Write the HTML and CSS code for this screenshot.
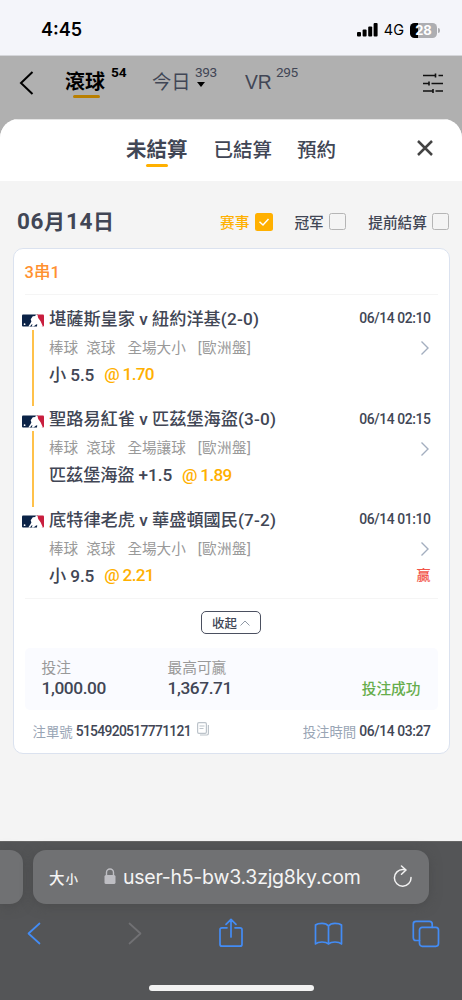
FILE: index.html
```html
<!DOCTYPE html>
<html lang="zh-Hant">
<head>
<meta charset="utf-8">
<meta name="viewport" content="width=device-width">
<title>注單</title>
<link rel="stylesheet" href="styles.css">
</head>
<body>
<svg width="0" height="0" class="defs">
  <symbol id="mlb" viewBox="0 0 22 13">
    <path d="M1 .5h15l-1 12H1q-1 0-1-1v-10q0-1 1-1z" fill="#0b2347"/>
    <path d="M14.500.5H21q1 0 1 1v10q0 1-1 1h-1L16 7z" fill="#c81e3e"/>
    <path d="M6.300 12.600 8.600 9 9.400 7.400 8.700 5.200 10.800 2.300l2.500-.2L13.800.5h1.600l.8 3.400 2.400 3.300 2.300 5.400H18.200L16.300 10l-2.200.5L11.500 12.600z" fill="#fff"/>
    <path d="M9.500 10.600l1-.4-.8 2.300H8z" fill="#0b2347"/>
    <circle cx="2.600" cy="10.200" r=".9" fill="#fff"/>
  </symbol>
  <symbol id="next" viewBox="0 0 10 16"><path d="M1.500 1.500 8 8l-6.500 6.500" fill="none" stroke="#a3aebf" stroke-width="1.400"/></symbol>
</svg>
<div class="phone">
  <div class="status">
    <span class="clock">4:45</span>
    <div class="signals">
      <svg width="21" height="14" viewBox="0 0 21 14"><rect y="9" width="4" height="4.500" rx="1"/><rect x="5.600" y="6.500" width="4" height="7" rx="1"/><rect x="11.200" y="3.500" width="4" height="10" rx="1"/><rect x="16.600" y="0" width="4" height="13.500" rx="1"/></svg>
      <span class="net">4G</span>
      <div class="battery"><span>28</span></div><i class="tip"></i>
    </div>
  </div>
  <nav class="nav">
    <svg class="back" width="15" height="26" viewBox="0 0 15 26"><path d="M13.500 2 2 13l11.500 11" fill="none" stroke="#000" stroke-width="2"/></svg>
    <div class="sport live">滾球<sup>54</sup></div>
    <div class="sport today">今日<sup>393</sup><i class="caret"></i></div>
    <div class="sport vr">VR<sup>295</sup></div>
    <svg class="filter" width="20" height="20" viewBox="0 0 20 20"><path d="M0 2.500h12M15.500 2.500H20M0 10.500h5.500M8.500 10.500H20M0 18h9.500M12.500 18H20M12.500.5v4M6 8.500v4M10 16v4" fill="none" stroke="#111" stroke-width="1.600"/></svg>
  </nav>
  <main class="sheet">
    <header class="tabs">
      <span class="tab on">未結算</span><span class="tab">已結算</span><span class="tab">預約</span>
      <svg class="close" width="16" height="16" viewBox="0 0 16 16"><path d="M1 1l14 14M15 1 1 15" stroke="#444" stroke-width="2.500"/></svg>
    </header>
    <div class="daybar">
      <h1><span class="din">06</span>月<span class="din">14</span>日</h1>
      <div class="check on">赛事<svg width="18" height="18" viewBox="0 0 18 18"><rect width="18" height="18" rx="2.500" fill="#ffb000"/><path d="M4.500 8.800 8 12l5.500-6" fill="none" stroke="#fff" stroke-width="1.500"/></svg></div>
      <div class="check second">冠军<i></i></div>
      <div class="check third">提前結算<i></i></div>
    </div>
    <section class="card">
      <div class="combo">3串1</div>
      <div class="legs">
        <article class="leg">
          <div class="rail"><svg width="22" height="13"><use href="#mlb"/></svg><i></i></div>
          <div class="info">
            <div class="teams"><span>堪薩斯皇家 v 紐約洋基<b class="score">(2-0)</b></span><time>06/14 02:10</time></div>
            <div class="market"><span>棒球</span><span class="kind">滾球</span><span class="play">全場大小</span><span class="odds">[歐洲盤]</span><svg width="10" height="16"><use href="#next"/></svg></div>
            <div class="pick"><span>小 5.5</span><b>@ 1.70</b></div>
          </div>
        </article>
        <article class="leg">
          <div class="rail"><svg width="22" height="13"><use href="#mlb"/></svg><i></i></div>
          <div class="info">
            <div class="teams"><span>聖路易紅雀 v 匹茲堡海盜<b class="score">(3-0)</b></span><time>06/14 02:15</time></div>
            <div class="market"><span>棒球</span><span class="kind">滾球</span><span class="play">全場讓球</span><span class="odds">[歐洲盤]</span><svg width="10" height="16"><use href="#next"/></svg></div>
            <div class="pick"><span>匹茲堡海盜 +1.5</span><b>@ 1.89</b></div>
          </div>
        </article>
        <article class="leg">
          <div class="rail"><svg width="22" height="13"><use href="#mlb"/></svg></div>
          <div class="info">
            <div class="teams"><span>底特律老虎 v 華盛頓國民<b class="score">(7-2)</b></span><time>06/14 01:10</time></div>
            <div class="market"><span>棒球</span><span class="kind">滾球</span><span class="play">全場大小</span><span class="odds">[歐洲盤]</span><svg width="10" height="16"><use href="#next"/></svg></div>
            <div class="pick"><span>小 9.5</span><b>@ 2.21</b><em>贏</em></div>
          </div>
        </article>
      </div>
      <div class="fold"><button>收起<svg width="10" height="6" viewBox="0 0 10 6"><path d="M.5 5.500 5 1l4.500 4.500" fill="none" stroke="#8f98a5"/></svg></button></div>
      <div class="summary">
        <div class="stake"><span>投注</span><b>1,000.00</b></div>
        <div class="win"><span>最高可贏</span><b>1,367.71</b></div>
        <div class="ok">投注成功</div>
      </div>
      <footer class="meta">
        <span>注單號</span><b class="num">5154920517771121</b>
        <svg width="12" height="14" viewBox="0 0 12 14"><rect x=".6" y=".6" width="8.800" height="10.800" rx="1.300" fill="#fff" stroke="#bcc3ca" stroke-width="1.200"/><path d="M2.500 4h5M2.500 6.500h4M3 13h7q1.400 0 1.400-1.400V3" fill="none" stroke="#bcc3ca" stroke-width="1.200"/></svg>
        <span class="when">投注時間</span><b>06/14 03:27</b>
      </footer>
    </section>
  </main>
  <div class="browser">
    <div class="address">
      <div class="prev"></div>
      <div class="url">
        <span class="aa">大<small>小</small></span>
        <svg class="lock" width="12" height="17" viewBox="0 0 12 17"><path d="M2.500 8V4.500a3.500 3.500 0 0 1 7 0V8" fill="none" stroke="#bebec3" stroke-width="1.400"/><rect x=".5" y="7" width="11" height="9" rx="1.600" fill="#bebec3"/></svg>
        <span class="host">user-h5-bw3.3zjg8ky.com</span>
        <svg class="reload" width="20" height="22" viewBox="0 0 20 22"><path d="M10 4.600A8.300 8.300 0 1 0 18 12.500M8.500 1l4.500 4-4.500 4.200M13 5q-1.500-.4-3-.4" fill="none" stroke="#f2f2f2" stroke-width="1.500" stroke-linecap="round" stroke-linejoin="round"/></svg>
      </div>
    </div>
    <div class="tools">
      <svg width="14" height="23" viewBox="0 0 14 23"><path d="M12.500 1.500 1.500 11.500l11 10" /></svg>
      <svg class="dim" width="14" height="23" viewBox="0 0 14 23"><path d="M1.500 1.500l11 10-11 10"/></svg>
      <svg class="share" width="26" height="30" viewBox="0 0 26 30"><path d="M9 9.800H4q-2 0-2 2v14.400q0 2 2 2h18q2 0 2-2V11.800q0-2-2-2h-5M13 19V1.500M8 6.300l5-5 5 5"/></svg>
      <svg width="29" height="24" viewBox="0 0 29 24"><path d="M14.500 4q-2-2.700-6.500-2.700T1.500 3v19q2-2 6.500-2t6.500 2q2-2 6.500-2t6.500 2V3q-2-1.700-6.500-1.700T14.500 4v18"/></svg>
      <svg width="28" height="28" viewBox="0 0 28 28"><path d="M7.500 20.500H4q-2.700 0-2.700-2.700V4Q1.300 1.300 4 1.300h13.500q2.700 0 2.700 2.700v3.300"/><rect x="7.500" y="7.300" width="19" height="19" rx="2.700"/></svg>
    </div>
    <div class="home"></div>
  </div>
</div>
</body>
</html>
```

FILE: styles.css
```css
* { box-sizing: border-box; }
body { margin: 0; font-family: Roboto, "Noto Sans CJK TC", sans-serif; color: #414655; }
svg { display: block; flex: none; }
.defs { position: absolute; }
span, b, time { white-space: nowrap; }
.phone { width: 462px; height: 1000px; display: flex; flex-direction: column; overflow: hidden; background: #b0b0b0; }

.status { height: 56px; flex: none; display: flex; align-items: flex-start; justify-content: space-between; padding: 19px 22px 0 41px; background: #f4f5fa; border-bottom: 1px solid #d5d6da; font-family: Inter, sans-serif; color: #000; }
.clock { font-size: 18px; font-weight: 600; line-height: 22px; }
.signals { display: flex; align-items: center; padding-top: 3px; }
.net { font-size: 14.500px; line-height: 16px; margin-left: 6px; }
.battery { width: 27px; height: 15px; margin-left: 6px; border-radius: 4.500px; background: linear-gradient(90deg, #000 0 8px, #adaeb2 8px); color: #fff; font-size: 13px; font-weight: 700; line-height: 15px; text-align: center; }
.tip { width: 2px; height: 5px; margin-left: 1px; border-radius: 0 2px 2px 0; background: #adaeb2; }

.nav { height: 63px; flex: none; display: flex; align-items: flex-start; padding: 13px 19px 0; color: #414655; }
.back { margin-top: 1px; }
.sport { position: relative; font-size: 19.300px; line-height: 27px; white-space: nowrap; }
.sport sup { position: absolute; top: -5px; font-size: 13.700px; line-height: 16px; letter-spacing: -.4px; }
.live { margin-left: 31px; width: 87px; font-size: 20px; font-weight: 700; color: #000; }
.live sup { left: 46px; letter-spacing: 0; }
.live::after { content: ""; position: absolute; left: 8px; top: 26px; width: 27px; height: 3px; border-radius: 2px; background: #b97f00; }
.today { width: 93px; }
.today sup { left: 43px; }
.caret { position: absolute; left: 45px; top: 13px; border: 4.500px solid transparent; border-top: 5px solid #000; border-bottom: 0; }
.vr { font-family: "Liberation Sans", sans-serif; }
.vr sup { left: 31px; font-family: Roboto, sans-serif; }
.filter { margin: 4px 0 0 auto; }

.sheet { height: 721.500px; flex: none; border-radius: 19px 19px 0 0; overflow: hidden; background: #f4f4f4; }
.tabs { height: 62px; display: flex; gap: 26px; padding: 16px 29px 0 126px; border-top: 1px solid #e5e5e5; background: #fff; }
.tab { position: relative; font-size: 19.500px; font-weight: 500; line-height: 29px; }
.tab:nth-child(3) { margin-left: -1px; }
.tab.on { font-size: 20.500px; font-weight: 700; }
.tab.on::after { content: ""; position: absolute; left: 20px; top: 28px; width: 22px; height: 3px; border-radius: 2px; background: #ffb000; }
.close { margin: 4px 0 0 auto; }
.daybar { height: 67px; display: flex; padding: 26px 13px 0 17px; }
h1 { margin: 0; width: 203px; font-size: 21px; line-height: 29px; letter-spacing: 1px; white-space: nowrap; }
h1 .din { font-size: 22.500px; letter-spacing: .6px; }
.check { display: flex; align-items: center; height: 29px; gap: 6px; font-size: 14.700px; font-weight: 500; white-space: nowrap; }
.check.on { color: #ffb000; }
.check i { width: 17px; height: 17px; border: 1px solid #b5b5b5; border-radius: 2.500px; }
.second { margin-left: 21px; }
.second { gap: 5px; }
.third { margin-left: auto; gap: 5px; }

.card { width: 437px; height: 506px; margin-left: 12.500px; border: 1px solid #dbe2ef; border-radius: 10px; background: #fff; }
.combo { height: 46px; margin: 0 11px; line-height: 47px; font-size: 16.500px; font-weight: 500; color: #ff9130; border-bottom: 1px solid #f5f5f5; }
.legs { height: 304px; margin: 0 11px; padding-top: 7px; border-bottom: 1px solid #f5f5f5; }
.leg { display: flex; height: 100.600px; margin-left: -3px; }
.rail { width: 27.500px; padding-top: 12px; }
.rail i { display: block; width: 2px; height: 76px; margin: 3px 0 0 10px; background: #ffc14a; }
.info { flex: 1; padding-right: 7px; }
.teams { display: flex; justify-content: space-between; align-items: center; height: 30px; font-size: 17.200px; font-weight: 500; }
.score { font-weight: 500; letter-spacing: .2px; }
.teams time { margin-top: 2px; font-size: 13.900px; letter-spacing: -.4px; }
.market { display: flex; align-items: center; height: 28px; font-size: 14.600px; color: #999; }
.kind { margin: 0 12px 0 8px; }
.play { margin-right: 12px; }
.odds { letter-spacing: .4px; }
.market svg { margin: 4px 1px 0 auto; }
.pick { display: flex; align-items: center; height: 26px; font-size: 17.200px; font-weight: 500; letter-spacing: -.1px; }
.pick b { margin: 2px 0 0 10px; font-size: 17.200px; font-weight: 500; letter-spacing: -.7px; color: #ffb000; }
.pick em { margin-left: auto; font-size: 14px; font-style: normal; color: #f25549; }

.fold { height: 49px; display: flex; justify-content: center; padding-top: 12px; }
button { width: 60px; height: 23px; display: flex; align-items: center; justify-content: center; gap: 3px; padding: 0; border: 1.500px solid #4b5060; border-radius: 5px; background: #fff; font: 500 12.500px Roboto, "Noto Sans CJK TC", sans-serif; color: #414655; }
.summary { height: 62px; margin: 0 11px; display: flex; padding: 10px 17px 0; border-radius: 5px; background: #fafbff; }
.summary div { display: flex; flex-direction: column; }
.summary span { font-size: 14.700px; line-height: 20px; color: #999; }
.summary b { font-size: 17.300px; font-weight: 500; line-height: 21px; letter-spacing: -.4px; }
.stake { width: 126px; }
.summary .ok { margin: 20px 0 0 auto; font-size: 14.700px; line-height: 23px; font-weight: 500; color: #66ad4c; }
.meta { display: flex; align-items: center; height: 42px; padding: 0 18px 0 19px; font-size: 13.400px; color: #99a5b5; }
.meta b { margin-left: 3px; font-size: 13.900px; font-weight: 500; letter-spacing: -.4px; color: #414655; }
.meta b.num { letter-spacing: -.69px; }
.meta svg { margin: -4px 0 0 6px; }
.when { margin-left: auto; }

.browser { height: 159.500px; flex: none; background: #545557; border-top: 1px solid #666; }
.address { height: 65px; display: flex; gap: 10px; padding-top: 8px; }
.prev { width: 23px; height: 54px; border-radius: 0 13px 13px 0; background: #707173; box-shadow: 0 2px 12px #4448; }
.url { width: 396px; height: 54px; display: flex; align-items: center; padding: 0 16px; border-radius: 13px; background: #707173; color: #f4f4f4; box-shadow: 0 2px 12px #4448; }
.aa { width: 55px; font-size: 15.500px; font-weight: 500; }
.aa small { font-size: 12.500px; margin-left: 1px; }
.host { margin-left: 7px; font: 19.500px Inter, sans-serif; letter-spacing: -.25px; }
.reload { margin: -2px 0 0 auto; }
.tools { height: 54px; display: grid; grid-template-columns: repeat(5, 98px); justify-items: center; align-items: center; margin: 0 -13px 0 -15px; fill: none; stroke: #438cf5; stroke-width: 1.700; stroke-linecap: round; stroke-linejoin: round; }
.tools .dim { stroke: #717174; margin-left: 5px; }
.tools .share { margin: -2px 0 0 2px; }
.home { width: 165px; height: 6px; margin: 24px auto 0; border-radius: 3px; background: #f2f2f2; }
```
